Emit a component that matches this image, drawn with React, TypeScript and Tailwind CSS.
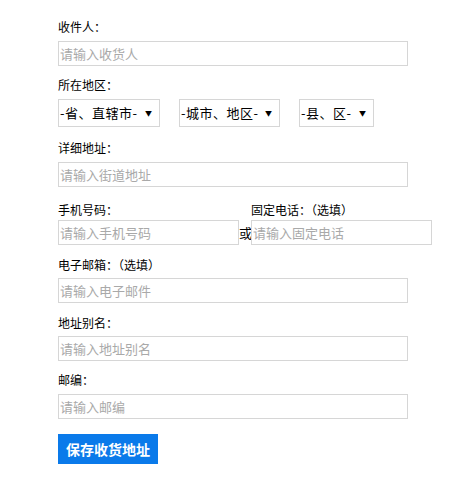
const font = { fontFamily: '"Noto Sans CJK SC", "Liberation Sans", sans-serif' }

function Label({ children, className = '' }: { children: React.ReactNode; className?: string }) {
  return <div className={`h-[12px] text-[12px] leading-[12px] text-black ${className}`}>{children}</div>
}

function Field({ placeholder, className = '' }: { placeholder: string; className?: string }) {
  return (
    <input
      placeholder={placeholder}
      className={`h-[25px] border border-[#d6d6d6] bg-white pl-[1px] text-[13px] text-black outline-none placeholder:text-[#a9a9a9] ${className}`}
    />
  )
}

function Select({ text, width }: { text: string; width: string }) {
  return (
    <div className={`flex h-[28px] ${width} items-center justify-between border border-[#d6d6d6] bg-white pl-[1px] pr-[7px] text-[13px] text-black`}>
      <span className="tracking-[0.5px]">{text}</span>
      <span className="text-[7px]">▼</span>
    </div>
  )
}

export default function App() {
  return (
    <div className="min-h-screen bg-white pl-[58px] pt-[21px]" style={font}>
      <Label>收件人：</Label>
      <Field placeholder="请输入收货人" className="mt-[8px] block w-[350px]" />

      <Label className="mt-[13px]">所在地区：</Label>
      <div className="mt-[8px] flex gap-[19px]">
        <Select text="-省、直辖市-" width="w-[102px]" />
        <Select text="-城市、地区-" width="w-[101px]" />
        <Select text="-县、区-" width="w-[75px]" />
      </div>

      <Label className="mt-[15px]">详细地址：</Label>
      <Field placeholder="请输入街道地址" className="mt-[8px] block w-[350px]" />

      <div className="mt-[17px] flex">
        <Label className="w-[193px]">手机号码：</Label>
        <Label>固定电话：（选填）</Label>
      </div>
      <div className="mt-[4px] flex items-center">
        <Field placeholder="请输入手机号码" className="w-[181px]" />
        <span className="w-[12px] text-[13px] leading-[13px] text-black">或</span>
        <Field placeholder="请输入固定电话" className="w-[181px]" />
      </div>

      <Label className="mt-[14px]">电子邮箱：（选填）</Label>
      <Field placeholder="请输入电子邮件" className="mt-[7px] block w-[350px]" />

      <Label className="mt-[14px]">地址别名：</Label>
      <Field placeholder="请输入地址别名" className="mt-[7px] block w-[350px]" />

      <Label className="mt-[13px]">邮编：</Label>
      <Field placeholder="请输入邮编" className="mt-[8px] block w-[350px]" />

      <button className="mt-[15px] h-[30px] w-[100px] bg-[#0a7aea] text-[14px] font-bold text-white">
        保存收货地址
      </button>
    </div>
  )
}
